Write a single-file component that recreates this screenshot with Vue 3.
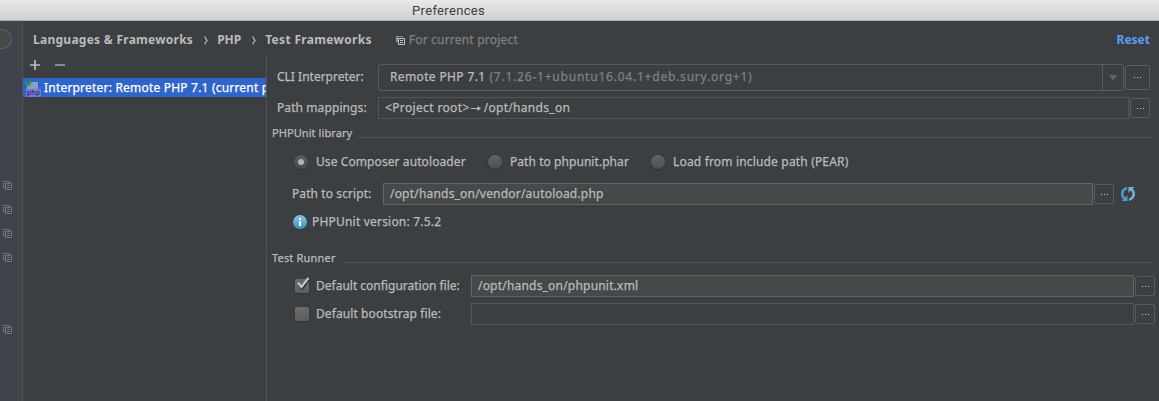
<script setup>
const markers = [181, 205, 229, 253, 325].map((top, i, all) => ({
  id: i,
  gap: i === 0 ? 0 : top - all[i - 1] - 9,
}))
const radios = [
  { label: 'Use Composer autoloader', checked: true, cls: 'r1' },
  { label: 'Path to phpunit.phar', checked: false, cls: 'r2' },
  { label: 'Load from include path (PEAR)', checked: false, cls: 'r3' },
]
const files = [
  { label: 'Default configuration file:', value: '/opt/hands_on/phpunit.xml', checked: true, cls: 'c1' },
  { label: 'Default bootstrap file:', value: '', checked: false, cls: 'c2' },
]
</script>

<template>
  <div class="window">
    <header class="titlebar"><span>Preferences</span></header>
    <div class="body">
      <aside class="rail">
        <div class="search-end"></div>
        <div class="markers">
          <svg v-for="m in markers" :key="m.id" :style="{ marginTop: m.gap + 'px' }" width="9" height="9" viewBox="0 0 9 9" fill="none">
            <path d="M2 6.5H.5v-6h6V2" stroke="#667782" />
            <path d="M2.5 2.5h6v6h-6zM4 4.5h3M4 6.5h3" stroke="#76787a" />
          </svg>
        </div>
      </aside>
      <main class="main">
        <div class="crumbs">
          <b class="k1">Languages &amp; Frameworks</b>
          <svg class="chev" width="4" height="9" viewBox="0 0 4 9" fill="none"><path d="M.7.5C1.2 2.2 2 3.4 3.2 4.5 2 5.6 1.2 6.8.7 8.5" stroke="#b0b2b3" stroke-width="1.2" /></svg>
          <b class="k2">PHP</b>
          <svg class="chev" width="4" height="9" viewBox="0 0 4 9" fill="none"><path d="M.7.5C1.2 2.2 2 3.4 3.2 4.5 2 5.6 1.2 6.8.7 8.5" stroke="#b0b2b3" stroke-width="1.2" /></svg>
          <b class="k3">Test Frameworks</b>
          <svg class="proj" width="9" height="9" viewBox="0 0 9 9" fill="none">
            <path d="M1.5 6V.5H7" stroke="#7d97a6" />
            <path d="M2.5 2.5h6v6h-6zM4 4.5h3M4 6.5h3" stroke="#c0c2c4" />
            <path d="M.5 6V0" stroke="#7d97a6" />
          </svg>
          <span class="dim k4">For current project</span>
          <b class="reset">Reset</b>
        </div>
        <div class="columns">
          <section class="list">
            <div class="tools">
              <svg width="10" height="10" viewBox="0 0 10 10"><path d="M0 5h10M5 0v10" stroke="#bbb" stroke-width="1.7" /></svg>
              <svg width="10" height="10" viewBox="0 0 10 10"><path d="M0 5h10" stroke="#999" stroke-width="1.7" /></svg>
            </div>
            <div class="item">
              <svg width="16" height="18" viewBox="0 0 16 18">
                <path d="M7 3h6v7H2V7h2z" fill="#87a0bd" />
                <rect x="1" y="10" width="15" height="8" fill="#7478dc" />
                <path d="M.5 3.5 3 6.500 6.500 2" fill="none" stroke="#37a22d" stroke-width="1.9" />
                <text x="8.500" y="15.500" text-anchor="middle" class="php">php</text>
              </svg>
              <span>Interpreter: Remote PHP 7.1 (current project)</span>
            </div>
          </section>
          <section class="form">
            <div class="row cli">
              <label class="f1">CLI Interpreter:</label>
              <div class="combo">
                <span class="f2">Remote PHP 7.1</span>
                <span class="dim f3">(7.1.26-1+ubuntu16.04.1+deb.sury.org+1)</span>
                <i class="arrow"><svg width="8" height="6" viewBox="0 0 8 6"><path d="M0 0h8L4 6z" fill="#5f6162" /></svg></i>
              </div>
              <button class="more wide"><i></i><i></i><i></i></button>
            </div>
            <div class="row maps">
              <label class="f4">Path mappings:</label>
              <div class="field plain">
                <span class="f5">&lt;Project root&gt;</span>
                <svg class="to" width="12" height="8" viewBox="0 0 12 8"><path d="M1 4.5h9" stroke="#bbb" /><path d="M7.5 2 11 4.5 7.5 7z" fill="#bbb" /></svg>
                <span class="f6">/opt/hands_on</span>
              </div>
              <button class="more"><i></i><i></i><i></i></button>
            </div>
            <div class="group g1"><span>PHPUnit library</span><hr /></div>
            <div class="row radios">
              <label v-for="r in radios" :key="r.cls" :class="r.cls">
                <i class="radio" :class="{ on: r.checked }"></i><span>{{ r.label }}</span>
              </label>
            </div>
            <div class="row script">
              <label class="f7">Path to script:</label>
              <div class="field"><span class="f8">/opt/hands_on/vendor/autoload.php</span></div>
              <button class="more"><i></i><i></i><i></i></button>
              <svg class="refresh" width="14" height="14" viewBox="0 0 14 14">
                <path d="M6 .1C2.500.6 0 3.400 0 6.900 0 9 .9 10.900 2.400 12.200L.8 14H6.500V8L4.200 10.400C3.200 9.500 2.600 8.300 2.600 6.900 2.600 4.800 4 3.100 6 2.600z" fill="#4d9acb" />
                <path d="M8 13.900c3.500-.5 6-3.300 6-6.800 0-2.100-.9-4-2.400-5.300L13.500 0H7.500v6l2.300-2.400c1 .9 1.600 2.100 1.600 3.500 0 2.100-1.400 3.800-3.400 4.300z" fill="#72afd6" />
              </svg>
            </div>
            <div class="row info">
              <svg width="14" height="14" viewBox="0 0 14 14">
                <defs><linearGradient id="ig" x2="0" y2="1"><stop stop-color="#86c3e3" /><stop offset="1" stop-color="#4191bf" /></linearGradient></defs>
                <circle cx="7" cy="7" r="7" fill="url(#ig)" />
                <path d="M6 3h2v2H6zM6 6h2v5H6z" fill="#fff" />
              </svg>
              <span class="f9">PHPUnit version: 7.5.2</span>
            </div>
            <div class="group g2"><span>Test Runner</span><hr /></div>
            <div v-for="f in files" :key="f.cls" class="row file">
              <i class="check"><svg v-if="f.checked" width="16" height="16" viewBox="0 0 16 16" fill="none"><path d="M3.500 7 7 11.500 14 2.500" stroke="#222" stroke-width="2" /><path d="M3 5.800 6.500 10 13.500 1" stroke="#c6c6c6" stroke-width="2.200" /></svg></i>
              <label :class="f.cls">{{ f.label }}</label>
              <div class="field" :class="{ off: !f.checked }"><span class="f10">{{ f.value }}</span></div>
              <button class="more"><i></i><i></i><i></i></button>
            </div>
          </section>
        </div>
      </main>
    </div>
  </div>
</template>

<style>
body { margin: 0; overflow: hidden; background: #3c3f41; }
</style>

<style scoped>
* { box-sizing: border-box; }
svg { display: block; flex: none; }
.window { width: 1159px; height: 401px; overflow: hidden; display: flex; flex-direction: column; background: #3c3f41; color: #bbb; font: 12px/16px "Noto Sans", "Open Sans", sans-serif; white-space: nowrap; -webkit-text-stroke: .25px; }
.titlebar { height: 21px; flex: none; background: linear-gradient(#e9e9e9, #d0d0d0); border-bottom: 1px solid #aeaeae; color: #404040; font: 13px/22px Roboto, sans-serif; padding-left: 412px; letter-spacing: .34px; -webkit-text-stroke: 0; }
.body { flex: 1; display: flex; min-height: 0; }
.rail { width: 23px; flex: none; background: #3f434c; border-right: 1px solid #515151; }
.search-end { width: 12px; height: 20px; margin-top: 8px; border: 1px solid #626460; border-left: 0; border-radius: 0 10px 10px 0; background: #45494a; }
.markers { margin: 132px 0 0 3px; }
.main { flex: 1; min-width: 0; display: flex; flex-direction: column; }
.crumbs { height: 32px; display: flex; align-items: center; padding: 6px 9px 0 10px; }
.crumbs b { -webkit-text-stroke: 0; }
.k1 { letter-spacing: .26px; }
.k3 { letter-spacing: .32px; }
.k4 { letter-spacing: .2px; }
.chev { margin: 0 9px 0 11px; }
.k2 + .chev { margin-right: 9px; }
.crumbs .proj { margin: 0 4px 0 24px; }
.dim { color: #808080; }
.reset { margin-left: auto; color: #589df6; }
b { font-weight: 700; }
.columns { flex: 1; display: flex; min-height: 0; }
.list { width: 244px; flex: none; border-right: 1px solid #515151; overflow: hidden; }
.tools { height: 25px; display: flex; gap: 15px; padding: 7px 0 0 7px; }
.item { height: 19px; display: flex; align-items: center; background: #2f65ca; color: #fff; padding-left: 2px; gap: 3px; letter-spacing: .2px; }
.item span { flex: 1; min-width: 0; overflow: hidden; }
.php { font: 7px "DejaVu Sans", sans-serif; fill: #20204c; letter-spacing: 0; -webkit-text-stroke: 0; }
.form { flex: 1; min-width: 0; padding-top: 11px; }
.row { display: flex; align-items: center; }
.cli { height: 27px; padding-left: 10px; }
.cli label { width: 101px; padding-bottom: 1px; }
.combo { width: 746px; height: 27px; border: 1px solid #5b5b5b; border-radius: 3px; display: flex; align-items: center; padding-left: 11px; }
.combo span { padding-bottom: 1px; }
.f2, .f5 { letter-spacing: .36px; }
.combo .f3 { margin-left: 4px; letter-spacing: .78px; }
.f4, .f7, .c2, .r1 { letter-spacing: .09px; }
.f6 { letter-spacing: .3px; margin-left: 2px; }
.r2 { letter-spacing: .06px; }
.r3 { letter-spacing: .17px; }
.f8, .f9, .f10 { letter-spacing: .2px; }
.arrow { margin-left: auto; width: 21px; height: 25px; border-left: 1px solid #5b5b5b; display: flex; align-items: center; padding-left: 6px; }
.more { width: 20px; height: 20px; padding: 0; margin-left: 1px; border: 1px solid #5b5b5b; border-radius: 2px; background: none; display: flex; align-items: center; justify-content: center; gap: 2px; }
.more i { width: 1px; height: 1px; background: #ccc; }
.more.wide { width: 25px; height: 25px; }
.maps { margin-top: 6px; padding-left: 10px; }
.maps label { width: 101px; }
.field { height: 22px; border: 1px solid #646464; background: #45494a; display: flex; align-items: center; padding-left: 6px; }
.field.plain, .field.off { background: none; border-color: #555; }
.maps .field { width: 751px; }
.group { height: 16px; display: flex; font-size: 11px; padding-left: 5px; letter-spacing: .08px; }
.group hr { width: auto; flex: 1; margin: 12px 8px 0 7px; border: 0; height: 1px; background: #555; }
.group span { flex: none; }
.g1 { margin-top: 6px; }
.g1 span { width: 80px; }
.g2 span { width: 65px; letter-spacing: .18px; }
.radios { height: 20px; margin-top: 11px; padding-left: 27px; }
.radios label { display: flex; align-items: center; gap: 8px; }
.r1 { width: 194px; }
.r2 { width: 163px; }
.radio { width: 14px; height: 14px; flex: none; border-radius: 50%; background: linear-gradient(#616567, #4d5052); box-shadow: 0 0 0 .5px #34373a, 0 1px 1px #2c2e30; display: flex; align-items: center; justify-content: center; }
.radio.on { background: linear-gradient(#585c5e, #484b4d); }
.radio.on::after { content: ""; width: 6px; height: 6px; border-radius: 50%; background: #b4b4b4; }
.script { height: 22px; margin-top: 11px; padding-left: 25px; }
.script label { width: 91px; }
.script .field { width: 710px; }
.refresh { margin-left: 7px; }
.info { height: 18px; margin-top: 8px; padding-left: 26px; gap: 5px; }
.g2 { margin-top: 19px; }
.file { height: 22px; padding-left: 28px; margin-top: 6px; }
.g2 + .file { margin-top: 9px; }
.file label { width: 155px; margin-left: 7px; }
.file .field { width: 663px; }
.check { width: 14px; height: 14px; border-radius: 2px; background: linear-gradient(#6b6b6b, #5e5e5e); box-shadow: 0 0 0 .5px #3a3a3a, 0 1px 1px #2c2e30; }
.check svg { margin: -2px 0 0; }
</style>
